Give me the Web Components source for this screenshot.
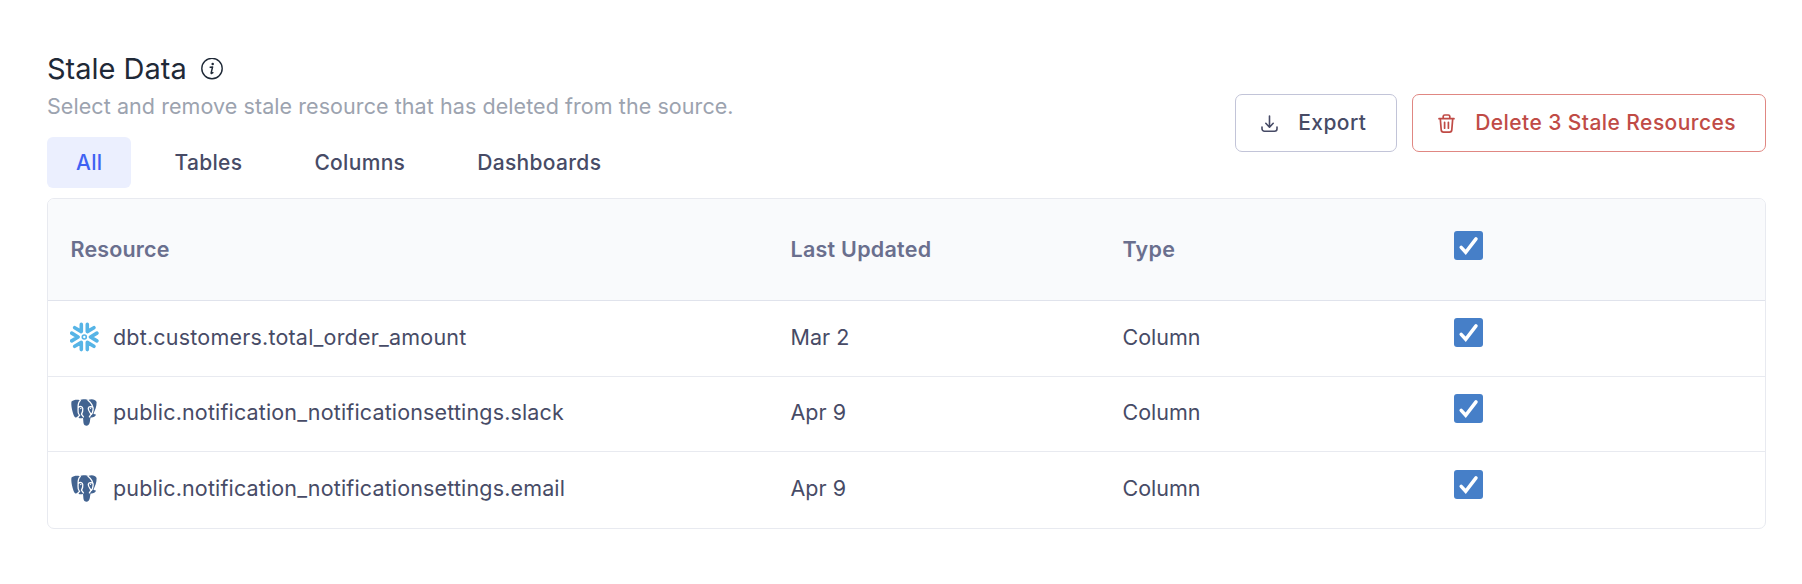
<!DOCTYPE html>
<html lang="en">
<head>
<meta charset="utf-8">
<title>Stale Data</title>
<style>
  html, body { margin: 0; background: #fff; }
  body { font-family: Inter, sans-serif; -webkit-font-smoothing: antialiased; }
</style>
</head>
<body>
<stale-page></stale-page>
<script>
const define = (name, html) => {
  const t = document.createElement('template');
  t.innerHTML = html;
  customElements.define(name, class extends HTMLElement {
    constructor() {
      super();
      this.attachShadow({ mode: 'open' }).append(t.content.cloneNode(true));
    }
  });
};

define('info-icon', `<style>:host{display:block;width:22px;height:22px}svg{display:block}</style>
<svg width="22" height="22" viewBox="0 0 22 22"><circle cx="11" cy="10.500" r="10.200" fill="none" stroke="#1f2937" stroke-width="1.400"/>
<circle cx="11.700" cy="5.900" r="1.250" fill="#1f2937"/><path d="M9.200 9.200l2.400-.3-1.500 6.200q0 .8 1.800-.4" fill="none" stroke="#1f2937" stroke-width="1.500" stroke-linejoin="round" stroke-linecap="round"/></svg>`);

define('download-icon', `<style>:host{display:block}svg{display:block}</style>
<svg width="17" height="17" viewBox="0 0 17 17" fill="none" stroke="currentColor" stroke-width="1.600" stroke-linecap="round" stroke-linejoin="round"><path d="M8.500 1v11M4.800 8.300l3.700 3.900 3.700-3.900M1 12v1.800a2.400 2.400 0 0 0 2.400 2.400h10.200a2.400 2.400 0 0 0 2.400-2.400V12"/></svg>`);

define('trash-icon', `<style>:host{display:block}svg{display:block}</style>
<svg width="17" height="19" viewBox="0 0 17 19" fill="none" stroke="currentColor" stroke-width="1.700" stroke-linecap="round" stroke-linejoin="round"><path d="M1 4.700h15M2.300 4.900l.9 11a2.300 2.300 0 0 0 2.300 2.200h6a2.300 2.300 0 0 0 2.300-2.200l.9-11M5.200 4.500V2.400A1.500 1.500 0 0 1 6.700 1h3.600a1.500 1.500 0 0 1 1.500 1.400v2.100M6.600 8.300v5.900M10.400 8.300v5.900"/></svg>`);

define('snowflake-icon', `<style>:host{display:block;margin-left:-1px}svg{display:block}</style>
<svg width="30" height="30" viewBox="-14.300 -15 30 30" fill="none" stroke="#56b4e6" stroke-width="3.600" stroke-linecap="round" stroke-linejoin="round">
<path d="M-12.600-3.900L-6.200 0l-6.400 3.900M12.600-3.900L6.200 0l6.400 3.900M-3-12.600v7.200l-6.600-3.900M3-12.600v7.200l6.600-3.900M-3 12.600V5.400l-6.600 3.900M3 12.600V5.400l6.600 3.900"/><circle r="2" stroke-width="1.600"/></svg>`);

define('postgres-icon', `<style>:host{display:block;margin-left:-1px}svg{display:block}</style>
<svg width="30" height="30" viewBox="0.700 -1 30 30">
<path fill="#426390" d="M2.200 3.500C4.500 1.700 8 1.500 10.500 2.300 12.500 1 17 .900 18.800 2 22 .600 26 1 27.300 4 27.500 8.500 25.700 12.500 24.100 15.400 25 16.300 25.700 16.400 26.800 16.600 26.200 18.800 23 19.900 21.300 19.400 20.500 22 21 25 19.300 26.700 17.900 28.200 15.300 27.900 14.500 26 13.900 24.200 14.100 22.500 13.700 20 11.500 20.600 9 20.600 9 18.800 7 20.300 5.200 19.600 4.300 17 3.200 13.500 1.400 7.500 2.200 3.500Z"/>
<g fill="none" stroke="#fff" stroke-width="1.300" stroke-linecap="round"><path d="M11 2.500C8 5 9 8.500 8.800 11.500 8.600 14 8.300 15.300 10.200 17.400L7.700 20M18.700 2.300C21.500 4.500 23.500 8 23.900 11M9.300 9.200C11 7.700 13.300 8.500 13.500 10.700 13.700 13 13.100 14.500 12.200 16.100L14.100 18.900M23.800 9.500C22 8.300 19.700 8.200 19 10.300 18.700 12.600 20.800 14.500 21.800 16.200L20.100 18.900M23.900 11C23.300 13 23.800 14.500 22.200 16.300"/></g>
<circle cx="11.500" cy="10.500" r=".7" fill="#fff"/><circle cx="21.200" cy="10.200" r=".7" fill="#fff"/></svg>`);

define('check-box', `<style>:host{display:block;width:29px;height:29px;border-radius:3px;background:#467fc8}svg{display:block}</style>
<svg width="29" height="29" viewBox="0 0 29 29"><path d="M7.200 16.400l4.500 4.800L22 7.900" fill="none" stroke="#fff" stroke-width="3.500" stroke-linecap="round"/></svg>`);

define('tab-item', `<style>
:host{display:flex;align-items:center;justify-content:center;box-sizing:border-box;height:51px;padding:0 29px;border-radius:6px;font-size:21px;font-weight:500;letter-spacing:.32px;color:#474b66;white-space:nowrap}
:host([active]){background:#ebeffe;color:#3f62f3}
</style><slot></slot>`);

define('action-button', `<style>
:host{display:flex;align-items:center;box-sizing:border-box;height:58px;border:1px solid #c2c4d8;border-radius:7px;font-size:21px;font-weight:500;letter-spacing:.43px;color:#474b66;background:#fff;white-space:nowrap;padding-left:25px}
:host([danger]){border-color:#e08782;color:#c04b46}
.label{margin:0 0 2px 20.200px}
</style><slot name="icon"></slot><span class="label"><slot></slot></span>`);

define('data-row', `<style>
:host{display:grid;grid-template-columns:720px 332px 331.500px 1fr;align-items:center;box-sizing:border-box;height:76px;padding:0 0 4px 22.500px;border-bottom:1px solid #e8eaf0;font-size:21.500px;color:#474b66;white-space:nowrap}
:host([head]){height:102px;padding-bottom:2px;background:#f9fafc;font-weight:600;letter-spacing:.25px;color:#6a6f8e;border-color:#e0e3ec}
:host([short]){height:75px}
:host([last]){border-bottom:0}
.name{display:flex;align-items:center;gap:13.500px;letter-spacing:.15px}
.check{margin-bottom:8px}
:host([head]) .check{margin-bottom:6px}
</style><div class="name"><slot name="icon"></slot><slot name="name"></slot></div><div><slot name="date"></slot></div><div><slot name="type"></slot></div><div class="check"><check-box></check-box></div>`);

define('stale-page', `<style>
:host{display:block;box-sizing:border-box;width:1802px;height:584px;padding:50px 36px 0 47px}
header{display:flex;justify-content:space-between}
h1{display:flex;align-items:center;gap:14px;margin:0;font-size:29px;line-height:37px;font-weight:400;color:#1f2937}
p{margin:2px 0 0;font-size:21.500px;line-height:34px;letter-spacing:.07px;color:#9ca3af}
nav{display:flex;margin-top:14px;gap:14px}
.actions{display:flex;gap:15px;padding-top:44px}
.table{box-sizing:border-box;width:1719px;margin-top:10px;border:1px solid #e8eaf0;border-radius:7px;overflow:hidden}
</style>
<header><div><h1><span>Stale Data</span><info-icon></info-icon></h1>
<p>Select and remove stale resource that has deleted from the source.</p>
<nav><tab-item active>All</tab-item><tab-item>Tables</tab-item><tab-item>Columns</tab-item><tab-item>Dashboards</tab-item></nav></div>
<div class="actions"><action-button style="width:162px"><download-icon slot="icon"></download-icon>Export</action-button>
<action-button danger style="width:354px"><trash-icon slot="icon"></trash-icon>Delete 3 Stale Resources</action-button></div></header>
<div class="table">
<data-row head><span slot="name">Resource</span><span slot="date">Last Updated</span><span slot="type">Type</span></data-row>
<data-row><snowflake-icon slot="icon"></snowflake-icon><span slot="name" style="letter-spacing:.2px">dbt.customers.total_order_amount</span><span slot="date">Mar 2</span><span slot="type">Column</span></data-row>
<data-row short><postgres-icon slot="icon"></postgres-icon><span slot="name">public.notification_notificationsettings.slack</span><span slot="date">Apr 9</span><span slot="type">Column</span></data-row>
<data-row last><postgres-icon slot="icon"></postgres-icon><span slot="name">public.notification_notificationsettings.email</span><span slot="date">Apr 9</span><span slot="type">Column</span></data-row>
</div>`);
</script>
</body>
</html>
